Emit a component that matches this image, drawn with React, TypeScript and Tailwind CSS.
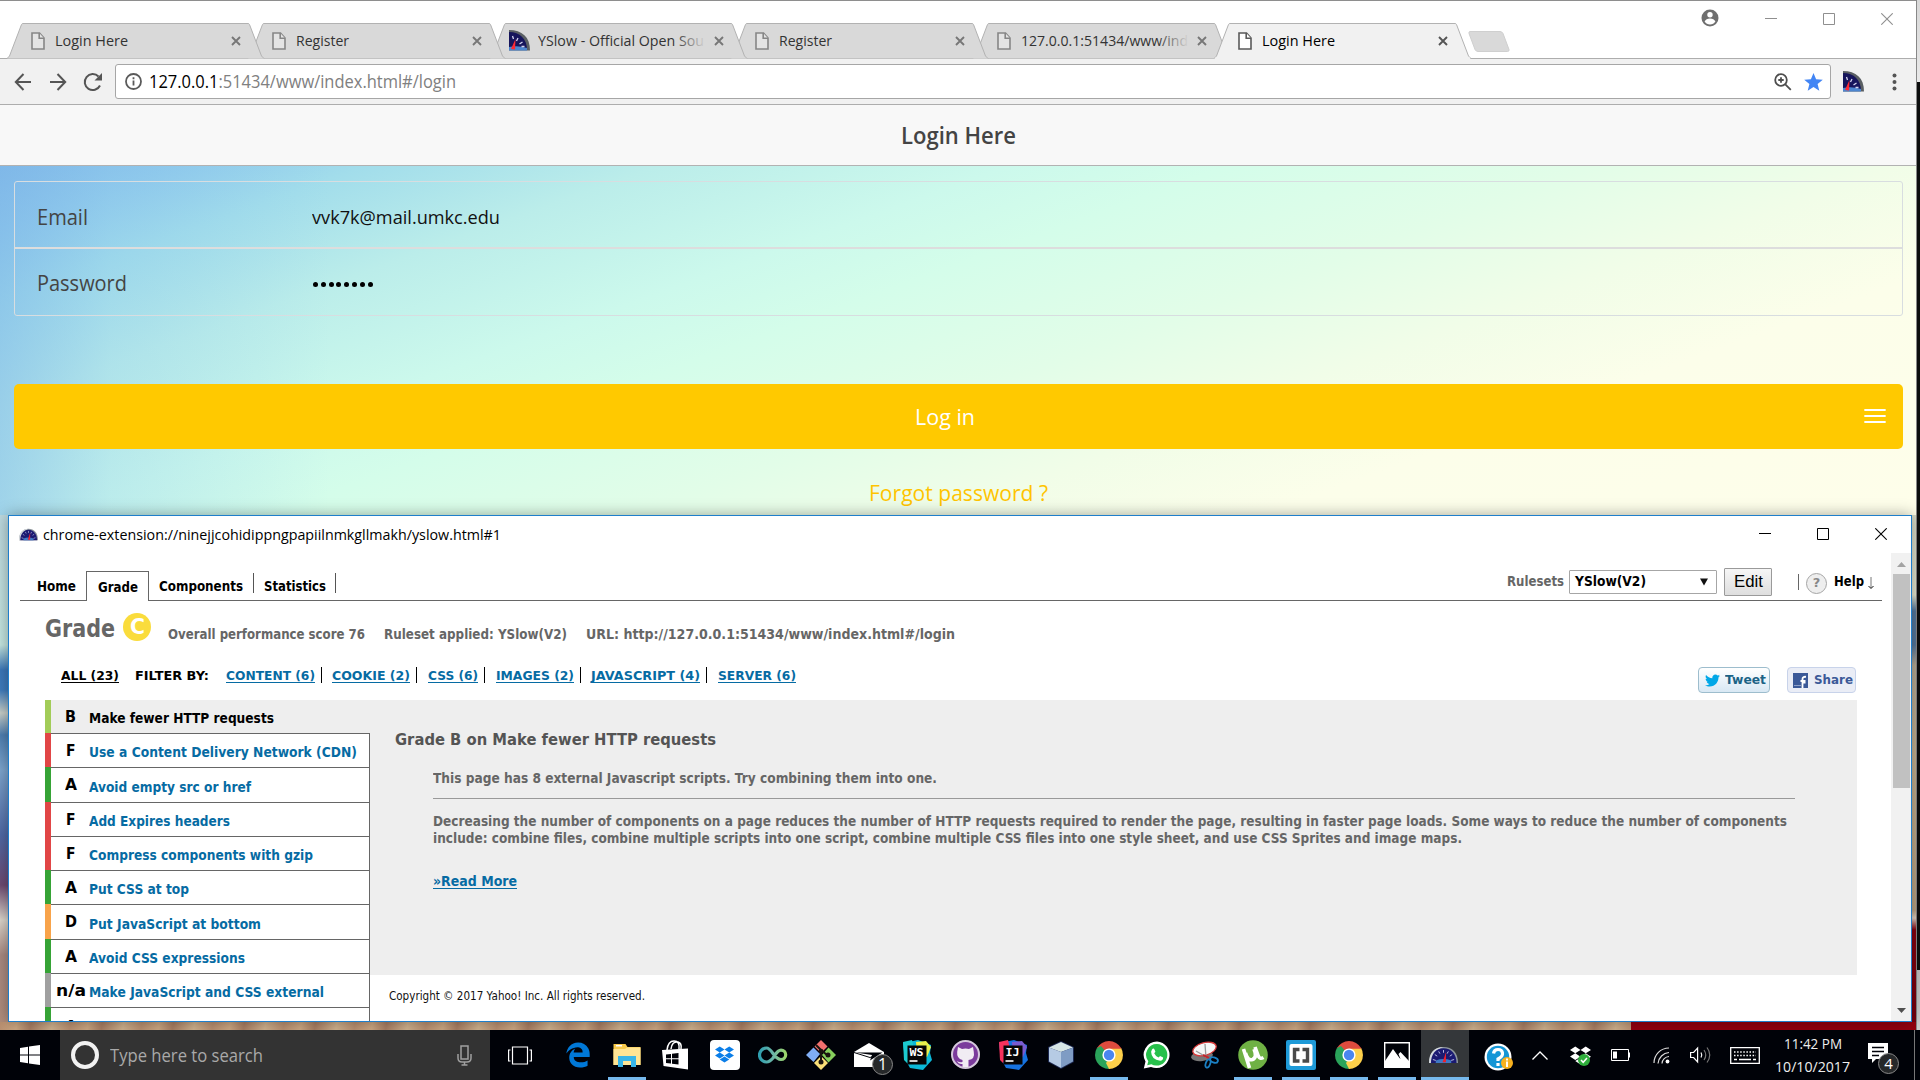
import { useLayoutEffect, useRef, type ReactNode } from 'react';
import { FaEdgeLegacy, FaDropbox, FaTwitter } from 'react-icons/fa6';

/** Single line of text set to an exact advance width. */
function Line({ w, className = '', link = false, children }: { w: number; className?: string; link?: boolean; children: ReactNode }) {
  const ref = useRef<HTMLSpanElement>(null);
  useLayoutEffect(() => {
    const el = ref.current;
    if (el && el.offsetWidth) el.style.transform = `scaleX(${w / el.getBoundingClientRect().width})`;
  }, [w]);
  return (
    <span className={`inline-block shrink-0 ${className}`} style={{ width: w }}>
      <span ref={ref} className={`inline-block origin-left whitespace-nowrap ${link ? 'underline decoration-1 underline-offset-2 [text-decoration-skip-ink:none]' : ''}`}>
        {children}
      </span>
    </span>
  );
}

const UI = "font-['Open_Sans','Noto_Sans',sans-serif]";
const TAHOMA = "font-['DejaVu_Sans',sans-serif]";

/* ---------- small icons ---------- */

function FileIcon({ dark = false }: { dark?: boolean }) {
  return (
    <svg width="14" height="18" viewBox="0 0 14 18" fill={dark ? '#fff' : '#e4e4e4'} stroke={dark ? '#5a5a5a' : '#868686'} strokeWidth="1.6">
      <path d="M1 1h7.5L13 6v11H1z" />
      <path d="M8.2 1v5.2H13" />
    </svg>
  );
}

function CloseX({ dark = false }: { dark?: boolean }) {
  return (
    <svg width="10" height="10" viewBox="0 0 10 10" stroke={dark ? '#555' : '#777'} strokeWidth="1.9">
      <path d="M1 1l8 8M9 1L1 9" />
    </svg>
  );
}

function HalfGauge({ size = 21 }: { size?: number }) {
  return (
    <svg width={size} height={size} viewBox="0 0 21 21">
      <path d="M0 0C13 0 21 7 21 20.500H0z" fill="#5a5f63" />
      <path d="M0 2C11 2 18 9 18 20H0z" fill="#16155c" />
      <path d="M0 17q9-2 18 1v2.500H0z" fill="#4d86cf" />
      <path d="M3.500 6l1 3M9 8l-1.500 3M13.500 12l-3 2M15.500 16.500h-3" stroke="#d5d5ee" strokeWidth="1.300" />
      <path d="M2 19L6.500 9 6 19.500z" fill="#ff2a35" />
    </svg>
  );
}

function Gauge({ w, h }: { w: number; h: number }) {
  return (
    <svg width={w} height={h} viewBox="0 0 30 20" preserveAspectRatio="none">
      <path d="M0 19C0 7 6 1 15 1s15 6 15 18z" fill="#8f979c" />
      <path d="M0 19C0 7 6 1 15 1C8 4 3 9 3 19z" fill="#d5dade" />
      <path d="M2 19C2 9 7 2.500 15 2.500S28.500 9 28.500 19z" fill="#1b1a72" />
      <path d="M7 16q8-3 16 0v3H7z" fill="#3f78c4" />
      <path d="M4 15l3 1M6 9.500l2.500 1.800M10 6l1.300 2.500M15 4.500v3M20 6l-1.300 2.500M24 9.500l-2.500 1.800M26 15l-3 1" stroke="#c3c3ea" strokeWidth="1" />
      <path d="M14 18l3.600-11L17.500 18z" fill="#f01f2c" />
    </svg>
  );
}

function WinControls({ color, gapClass, size }: { color: string; gapClass: string; size: number }) {
  return (
    <div className={`flex items-center ${gapClass}`}>
      <svg width={size} height={size} viewBox="0 0 12 12" stroke={color} strokeWidth="1">
        <path d="M0 5.500h12" />
      </svg>
      <svg width={size} height={size} viewBox="0 0 12 12" stroke={color} strokeWidth="1" fill="none">
        <path d="M.5.5h11v11H.5z" />
      </svg>
      <svg width={size} height={size} viewBox="0 0 12 12" stroke={color} strokeWidth="1.100">
        <path d="M.3.3l11.400 11.400M11.700.3L.3 11.700" />
      </svg>
    </div>
  );
}

/* ---------- browser window ---------- */

type TabData = { title: string; w: number; z: string; gauge?: boolean; fade?: boolean };

const TABS: TabData[] = [
  { title: 'Login Here', w: 73, z: 'z-50' },
  { title: 'Register', w: 53, z: 'z-40' },
  { title: 'YSlow - Official Open Sou', w: 166, z: 'z-30', gauge: true, fade: true },
  { title: 'Register', w: 53, z: 'z-20' },
  { title: '127.0.0.1:51434/www/ind', w: 167, z: 'z-10', fade: true },
  { title: 'Login Here', w: 73, z: 'z-[60]' },
];

function Tab({ tab, active }: { tab: TabData; active: boolean }) {
  return (
    <div className={`relative -mr-4 flex h-9 w-[257.400px] shrink-0 items-center ${tab.z}`}>
      <svg className="absolute inset-0" width="258" height="36" viewBox="0 0 258 36">
        <path d="M0 35.500L2.500 33L14.500 1.500Q15 .5 16 .5H241Q242 .5 242.500 1.500L254.500 33L257 35.500" fill={active ? '#f1f1f1' : '#d9d9d9'} stroke="#b2b2b2" />
        {active && <path d="M1 35.500H256" stroke="#f1f1f1" strokeWidth="2" />}
      </svg>
      <div className="relative flex h-full w-full items-center pb-px">
        <span className={`flex ${tab.gauge ? 'ml-[19px] w-[27px]' : 'ml-6 w-[22px]'}`}>{tab.gauge ? <HalfGauge size={21} /> : <FileIcon dark={active} />}</span>
        <span className="relative mb-[2px] ml-[2px] w-[168px] overflow-hidden text-[15px] leading-6 text-[#333]">
          <Line w={tab.w} className={active ? 'text-black' : ''}>{tab.title}</Line>
          {tab.fade && <span className="absolute inset-y-0 right-0 w-8 bg-linear-to-r from-transparent to-[#d9d9d9]" />}
        </span>
        <span className="ml-[8px]">
          <CloseX dark={active} />
        </span>
      </div>
    </div>
  );
}

function TabStrip() {
  return (
    <div className="flex h-[58px] border-t border-[#8e8e8e] bg-white">
      <div className="isolate mt-[22px] flex pl-[7px]">
        {TABS.map((t, i) => (
          <Tab key={i} tab={t} active={i === 5} />
        ))}
        <svg className="mt-[7px] ml-[12px]" width="44" height="24" viewBox="0 0 44 24">
          <path d="M3 1.500h30q2 0 3 2l6 16q.5 2-1.500 2H11q-2 0-3-2L2 3.500q-.5-2 1-2z" fill="#d9d9d9" stroke="#cfcfcf" />
        </svg>
      </div>
      <div className="ml-auto flex items-start pt-[10px]">
        <svg className="mt-[-2px]" width="18" height="18" viewBox="0 0 18 18">
          <circle cx="9" cy="9" r="8.500" fill="#6f6f6f" />
          <circle cx="9" cy="5.700" r="2.700" fill="#fff" />
          <path d="M3.600 12.500q1.500-3 5.400-3t5.400 3Q12.500 15.500 9 15.500t-5.400-3z" fill="#fff" />
        </svg>
        <div className="mr-[23px] ml-[46px] pt-[2px]">
          <WinControls color="#8f8f8f" gapClass="gap-[46px]" size={12} />
        </div>
      </div>
    </div>
  );
}

function Toolbar() {
  return (
    <div className="flex h-[47px] items-center border-y border-[#adadad] bg-[#f1f1f1]">
      <svg className="ml-[14px]" width="90" height="20" viewBox="0 0 90 20" fill="none" stroke="#555" strokeWidth="2">
        <path d="M17 10H2M9.500 2L1.800 10l7.700 8M36 10h15M43.500 2l7.700 8-7.700 8M86 13.500A8 8 0 1 1 84.500 4.500" />
        <path d="M88 1v7.500h-7.500z" fill="#555" stroke="none" />
      </svg>
      <div className="ml-[11px] flex h-[35px] w-[1716px] items-center rounded-[3px] border border-[#a6a6a6] bg-white">
        <svg className="ml-[9px]" width="17" height="17" viewBox="0 0 17 17" fill="none" stroke="#5a5a5a" strokeWidth="1.800">
          <circle cx="8.500" cy="8.500" r="7.500" />
          <path d="M8.500 7.500v5M8.500 4.200v2" />
        </svg>
        <Line w={307} className="mb-[2px] ml-[7px] text-[18px] leading-7 text-[#808080]">
          <span className="text-black">127.0.0.1</span>:51434/www/index.html#/login
        </Line>
        <svg className="ml-auto" width="18" height="18" viewBox="0 0 18 18" fill="none" stroke="#4e4e4e" strokeWidth="1.800">
          <circle cx="7" cy="7" r="5.800" />
          <path d="M11.300 11.300l5.500 5.500M4.300 7h5.400M7 4.300v5.400" />
        </svg>
        <svg className="mr-[7px] ml-[12px]" width="19" height="18" viewBox="0 0 19 18" fill="#4285f4">
          <path d="M9.500 0l2.600 6.300 6.700.5-5.200 4.300 1.700 6.700-5.800-3.700-5.800 3.700 1.700-6.700L.2 6.800l6.700-.5z" />
        </svg>
      </div>
      <span className="ml-[12px]">
        <HalfGauge size={21} />
      </span>
      <svg className="ml-[28px]" width="5" height="18" viewBox="0 0 5 18" fill="#555">
        <circle cx="2.500" cy="2.500" r="2" />
        <circle cx="2.500" cy="9" r="2" />
        <circle cx="2.500" cy="15.500" r="2" />
      </svg>
    </div>
  );
}

function LoginPage() {
  return (
    <>
      <div className="flex h-[61px] items-center justify-center border-b border-[#b2b2b2] bg-[#f8f8f8]">
        <Line w={115} className="text-[23px] leading-8 font-semibold text-[#444]">Login Here</Line>
      </div>
      <div className="h-[349px] bg-[linear-gradient(90deg,rgba(125,182,232,0.55)_0px,rgba(135,195,235,0.25)_110px,rgba(160,220,235,0)_330px),linear-gradient(160deg,#82bae9_0px,#90caec_60px,#a2ddeb_125px,#bbedea_225px,#ccf9ec_345px,#d4fdea_420px,#e2fde8_545px,#f1fde8_650px,#fcfeea_760px,#fefeea_983px)] px-[14px] pr-[13px] pt-[15px]">
        <div className="h-[135px] rounded-[3px] border border-[#d8dde0] text-[#444]">
          <div className="flex h-[66px] items-center border-b border-[#ddd] pl-[22px]">
            <Line w={51} className="mt-[3px] text-[22px]">Email</Line>
            <Line w={188} className="mt-[5px] ml-[224px] text-[19px] text-[#111]">vvk7k@mail.umkc.edu</Line>
          </div>
          <div className="flex h-[67px] items-center border-t border-[#ddd] pl-[22px]">
            <Line w={90} className="text-[22px]">Password</Line>
            <div className="mt-[5px] ml-[186px] flex gap-[2px]">
              {Array.from({ length: 8 }, (_, i) => (
                <span key={i} className="flex w-[5.800px]">
                  <span className="size-[5px] rounded-full bg-black" />
                </span>
              ))}
            </div>
          </div>
        </div>
        <div className="mt-[68px] flex h-[65px] items-center rounded-[5px] bg-[#ffc900] pr-[17px] text-white">
          <Line w={60} className="ml-[901px] text-[22px]">Log in</Line>
          <svg className="mb-[2px] ml-auto" width="22" height="14" viewBox="0 0 22 14" stroke="#fff" strokeWidth="1.800" strokeLinecap="round">
            <path d="M1 1h20M1 7h20M1 13h20" />
          </svg>
        </div>
        <div className="mt-[27px] ml-[855px]">
          <Line w={179} className="text-[22px] leading-8 text-[#ffc400]">Forgot password ?</Line>
        </div>
      </div>
    </>
  );
}

function BrowserWindow() {
  return (
    <div className={`absolute top-0 left-0 flex h-[1030px] w-[1917px] flex-col border-r border-[#888] ${UI}`}>
      <TabStrip />
      <Toolbar />
      <LoginPage />
      <div className="flex h-[507px] justify-between">
        <div className="w-2 bg-[linear-gradient(180deg,#bcd8de_0px,#c4e6e0_130px,#3c78ba_155px,#3f7cbd_175px,#c9cfc8_198px,#4e7fb2_220px,#7ea6cf_255px,#5069a6_320px,#6d4a72_370px,#dcd6cc_405px,#a98a82_440px,#b08d7c_507px)]" />
        <div className="w-[5px] bg-[linear-gradient(180deg,#d5d9c6_0px,#e3e6cf_80px,#56789c_96px,#56789c_130px,#b5aa94_150px,#c5b190_240px,#b8a283_395px,#e0d0c0_403px,#86000f_415px,#76000e_507px)]" />
      </div>
      <div className="flex flex-1">
        <div className="w-[1631px] bg-[repeating-linear-gradient(100deg,#b98f70_0px,#cda883_17px,#a97e63_31px,#d0b28e_52px,#b98f70_70px)]" />
        <div className="flex-1 bg-[#94000f]" />
      </div>
    </div>
  );
}

/* ---------- YSlow extension window ---------- */

const FILTERS: [string, number, string][] = [
  ['CONTENT (6)', 89, 'ml-[17px]'],
  ['COOKIE (2)', 78, 'ml-[10px]'],
  ['CSS (6)', 50, 'ml-[11px]'],
  ['IMAGES (2)', 78, 'ml-[10.500px]'],
  ['JAVASCRIPT (4)', 109, 'ml-[10.500px]'],
  ['SERVER (6)', 78, 'ml-[10.500px]'],
];

const RULES: { g: string; t: string; w: number; c: string; h: string }[] = [
  { g: 'F', t: 'Use a Content Delivery Network (CDN)', w: 268, c: 'border-l-[#e14646]', h: 'h-[34px]' },
  { g: 'A', t: 'Avoid empty src or href', w: 162, c: 'border-l-[#36a336]', h: 'h-[35px]' },
  { g: 'F', t: 'Add Expires headers', w: 141, c: 'border-l-[#e14646]', h: 'h-[34px]' },
  { g: 'F', t: 'Compress components with gzip', w: 224, c: 'border-l-[#e14646]', h: 'h-[34px]' },
  { g: 'A', t: 'Put CSS at top', w: 100, c: 'border-l-[#36a336]', h: 'h-[34px]' },
  { g: 'D', t: 'Put JavaScript at bottom', w: 172, c: 'border-l-[#f8a34a]', h: 'h-[35px]' },
  { g: 'A', t: 'Avoid CSS expressions', w: 156, c: 'border-l-[#36a336]', h: 'h-[34px]' },
  { g: 'n/a', t: 'Make JavaScript and CSS external', w: 235, c: 'border-l-[#a0a0a0]', h: 'h-[34px]' },
  { g: 'A', t: 'Reduce DNS lookups', w: 139, c: 'border-l-[#36a336]', h: 'h-[34px]' },
];

const GRADE_W: Record<string, number> = { A: 12, B: 11, D: 12, F: 9.5, 'n/a': 30 };

function ExtTabs() {
  return (
    <div className="flex h-[48px] w-[1862px] items-end text-[13.500px] font-bold text-black">
      <div className="flex h-[30px] w-[66px] items-center border-b border-[#666] pl-[17px]">
        <Line w={39} className="mt-px">Home</Line>
      </div>
      <div className="flex h-[30px] w-[63px] items-center justify-center border-x border-t border-[#666]">
        <Line w={40} className="mt-px">Grade</Line>
      </div>
      <div className="flex h-[30px] flex-1 items-center border-b border-[#666]">
        <Line w={84} className="mt-px ml-[10px]">Components</Line>
        <span className="mb-[6px] ml-[10px] h-5 w-px bg-[#555]" />
        <Line w={62} className="mt-px ml-[10px]">Statistics</Line>
        <span className="mb-[6px] ml-[9px] h-5 w-px bg-[#555]" />
        <div className="mb-[8px] ml-auto flex items-center">
          <Line w={57} className="text-[#666]">Rulesets</Line>
          <div className="ml-[5px] flex h-6 w-[148px] items-center justify-between rounded-[1px] border border-[#a6a6a6] bg-white pr-[8px] pl-[5px]">
            <Line w={71}>YSlow(V2)</Line>
            <svg width="8" height="8" viewBox="0 0 8 8"><path d="M0 .5h8L4 7.500z" fill="#111" /></svg>
          </div>
          <div className="ml-[7px] flex h-7 w-[48px] items-center justify-center rounded-[1px] border border-[#9a9a9a] bg-linear-to-b from-[#f6f6f6] to-[#dedede] pb-px font-['Liberation_Sans',sans-serif] text-[16.500px] font-normal">
            <Line w={29}>Edit</Line>
          </div>
          <span className="ml-[26px] h-4 w-px bg-[#666]" />
          <span className="mt-[3px] ml-[7px] flex size-[21px] items-center justify-center rounded-full border border-[#a5a5a5] bg-[#eee] text-[13px] text-[#888]">?</span>
          <Line w={30} className="ml-[7px]">Help</Line>
          <svg className="mt-[2px] mr-[8px] ml-[4px]" width="6" height="12" viewBox="0 0 6 12" stroke="#777" fill="none"><path d="M3 0v11" /><path d="M.5 9L3 11.500 5.500 9" stroke="#111" /></svg>
        </div>
      </div>
    </div>
  );
}

function GradeHeader() {
  return (
    <div className="flex h-[52px] items-start pl-[25px] text-[13.500px] font-bold text-[#666]">
      <Line w={70} className="mt-[9px] text-[25.500px] leading-9">Grade</Line>
      <span className="mt-[12px] ml-[8px] flex size-7 items-center justify-center rounded-full bg-[#fadc3c] text-[21px] leading-7 text-white">
        <Line w={15}>C</Line>
      </span>
      <Line w={197} className="mt-[23px] ml-[17px] leading-5">Overall performance score 76</Line>
      <Line w={183} className="mt-[23px] ml-[19px] leading-5">Ruleset applied: YSlow(V2)</Line>
      <Line w={369} className="mt-[23px] ml-[19px] leading-5">URL: http://127.0.0.1:51434/www/index.html#/login</Line>
    </div>
  );
}

function FilterBar() {
  return (
    <div className="flex h-[47px] items-start pt-[13px] pl-[41px] text-[13px] leading-5 font-bold">
      <Line w={58} link className="text-black">ALL (23)</Line>
      <Line w={74} className="ml-[16px] text-black">FILTER BY:</Line>
      {FILTERS.map(([t, w, m], i) => (
        <div key={t} className={`flex items-start ${m}`}>
          <Line w={w} link className="text-[#066ba3]">{t}</Line>
          {i < 5 && <span className="mt-px ml-[6px] h-4 w-px bg-black" />}
        </div>
      ))}
      <div className="mt-px mr-[35px] ml-auto flex gap-[17px]">
        <div className="flex h-[26px] w-[72px] items-center rounded-[4px] border border-[#9dbdcd] bg-linear-to-b from-white to-[#d8e8f4] pl-[6px] text-[#1b6386]">
          <FaTwitter size={15} color="#00a7e7" />
          <Line w={41} className="ml-[5px]">Tweet</Line>
        </div>
        <div className="flex h-[26px] w-[69px] items-center rounded-[4px] border border-[#c8d3ea] bg-[#eaedf6] pl-[5px] text-[#3b5998]">
          <svg width="15" height="15" viewBox="0 0 15 15">
            <path d="M0 0h15v15H0z" fill="#3b5998" />
            <path d="M9.500 15V9.500h3M9.500 10V6q0-2.500 3.500-2.200M7.500 8h5" stroke="#fff" strokeWidth="1.800" fill="none" />
            <path d="M1 12.500h7" stroke="#8ea0c8" />
          </svg>
          <Line w={39} className="ml-[6px]">Share</Line>
        </div>
      </div>
    </div>
  );
}

function RuleList() {
  return (
    <div className="w-[325px] shrink-0 text-[14px] leading-5 font-bold">
      <div className="flex h-[33px] items-center border-l-[6px] border-l-[#a2cc58] bg-[#eee] text-black">
        <span className="flex w-[38px] justify-center pl-px text-[16px]"><Line w={GRADE_W.B}>B</Line></span>
        <Line w={185} className="mt-[2px]">Make fewer HTTP requests</Line>
      </div>
      {RULES.map((r, i) => (
        <div key={r.t} className={`flex ${r.h} border-l-[6px] ${r.c}`}>
          <div className={`flex flex-1 items-center border-t border-r border-[#666] bg-white ${i === 8 ? 'pt-[4px]' : ''}`}>
            <span className="flex w-[38px] justify-center pl-px text-[16px] text-black"><Line w={GRADE_W[r.g]}>{r.g}</Line></span>
            <Line w={r.w} className="mt-[3px] text-[#066ba3]">{r.t}</Line>
          </div>
        </div>
      ))}
    </div>
  );
}

function RuleDetail() {
  return (
    <div className="w-[1487px]">
      <div className="h-[275px] bg-[#eee] pt-[28px] pl-[25px] text-[13.500px] font-bold text-[#666]">
        <Line w={321} className="block text-[16px] leading-6 text-[#545454]">Grade B on Make fewer HTTP requests</Line>
        <div className="ml-[38px] w-[1362px]">
          <div className="mt-[16px] h-[31px] border-b border-[#999]">
            <Line w={504} className="leading-5">This page has 8 external Javascript scripts. Try combining them into one.</Line>
          </div>
          <div className="mt-[14px] flex flex-col leading-[17px]">
            <Line w={1354}>Decreasing the number of components on a page reduces the number of HTTP requests required to render the page, resulting in faster page loads. Some ways to reduce the number of components</Line>
            <Line w={1029}>include: combine files, combine multiple scripts into one script, combine multiple CSS files into one style sheet, and use CSS Sprites and image maps.</Line>
          </div>
          <Line w={84} link className="mt-[24px] leading-5 text-[#066ba3]">»Read More</Line>
        </div>
      </div>
      <Line w={256} className="mt-[11px] ml-[19px] text-[12px] leading-5 text-[#111]">Copyright © 2017 Yahoo! Inc. All rights reserved.</Line>
    </div>
  );
}

function ExtensionWindow() {
  return (
    <div className="absolute top-[515px] left-[8px] flex h-[507px] w-[1904px] flex-col overflow-hidden border border-[#1e7ecb] bg-white shadow-[0_0_14px_rgba(0,0,0,0.35)]">
      <div className={`flex h-[37px] shrink-0 items-center pl-[10px] ${UI}`}>
        <Gauge w={19} h={13} />
        <Line w={458} className="ml-[5px] text-[14.500px] text-black">chrome-extension://ninejjcohidippngpapiilnmkgllmakh/yslow.html#1</Line>
        <div className="mr-[24px] mb-px ml-auto">
          <WinControls color="#000" gapClass="gap-[46px]" size={12} />
        </div>
      </div>
      <div className="flex min-h-0 flex-1">
        <div className={`h-[468px] w-[1882px] overflow-hidden pl-[11px] ${TAHOMA}`}>
          <ExtTabs />
          <GradeHeader />
          <FilterBar />
          <div className="flex pl-[25px]">
            <RuleList />
            <RuleDetail />
          </div>
        </div>
        <div className="flex flex-1 flex-col items-center bg-[#f1f1f1]">
          <svg className="mt-[9px]" width="9" height="5" viewBox="0 0 9 5"><path d="M4.500 0L9 5H0z" fill="#a3a3a3" /></svg>
          <div className="mt-[7px] h-[214px] w-[17px] bg-[#c1c1c1]" />
          <svg className="mt-auto mb-[8px]" width="9" height="5" viewBox="0 0 9 5"><path d="M4.500 5L9 0H0z" fill="#505050" /></svg>
        </div>
      </div>
    </div>
  );
}

/* ---------- taskbar ---------- */

function Chrome() {
  return (
    <svg width="28" height="28" viewBox="0 0 28 28">
      <path d="M14 14L1.900 7A14 14 0 0 1 26.100 7z" fill="#dd4b3e" />
      <path d="M14 14L26.100 7A14 14 0 0 1 14 28z" fill="#fdd04a" />
      <path d="M14 14v14A14 14 0 0 1 1.900 7z" fill="#2aa35a" />
      <path d="M14 7.500h12.300L20 17z" fill="#fdd04a" />
      <path d="M14 7.500h12.400L26.100 7 14 3z" fill="#dd4b3e" />
      <path d="M8.300 17.300L2 7l4-2 5 6z" fill="#2aa35a" />
      <path d="M19.700 17.300L14 28l-3-6 3-4z" fill="#fdd04a" />
      <circle cx="14" cy="14" r="6.600" fill="#fff" />
      <circle cx="14" cy="14" r="5.200" fill="#4a86f0" />
    </svg>
  );
}

function MonoBadge({ label, a, b, c }: { label: string; a: string; b: string; c: string }) {
  return (
    <svg width="30" height="30" viewBox="0 0 30 30">
      <path d="M1 3L16 0l13 5-1 8 2 7-9 10-13-2-5-9z" fill={a} />
      <path d="M14 2l10-1 5 6-4 10-10-3z" fill={b} />
      <path d="M1 2l9-2 2 9-7 14-3-3z" fill={c} />
      <path d="M5.500 5.500h19v19h-19z" fill="#050505" />
      <text x="7.500" y="15.500" fontFamily="DejaVu Sans Mono, monospace" fontWeight="700" fontSize="10" textLength="14" lengthAdjust="spacingAndGlyphs" fill="#fff">{label}</text>
      <path d="M7.500 21h8" stroke="#fff" strokeWidth="1.600" />
    </svg>
  );
}

const Folder = () => (
  <svg width="28" height="24" viewBox="0 0 28 24">
    <path d="M.5 1h12l2 3H27.500v18H.5z" fill="#f7c94b" />
    <path d="M3 2h6v1.500H3z" fill="#fff" />
    <path d="M.5 6H12l2-1.500h13.500V22H.5z" fill="#ffe594" />
    <path d="M5 24V13h18v11h-5v-6h-8v6z" fill="#38b6e8" />
  </svg>
);

const Store = () => (
  <svg width="27" height="30" viewBox="0 0 27 30">
    <path d="M5 10Q6 1 12 1t5 8M9 9q1-8 7-7 4 1 3 7" fill="none" stroke="#fff" strokeWidth="1.500" />
    <path d="M0 10l26-1.500v21L1.500 26z" fill="#fff" />
    <path d="M4 14.500l5-.6v4.300H4zM10 13.800l6.500-.8v5.200H10zM4 19.200h5v4.300l-5-.6zM10 19.200h6.500v5.200l-6.500-.7z" fill="#000208" />
  </svg>
);

const DropboxTile = () => (
  <span className="flex size-[30px] items-center justify-center rounded-[4px] bg-white">
    <FaDropbox size={19} color="#0b7ee8" />
  </span>
);

const Infinity = () => (
  <svg width="30" height="18" viewBox="0 0 30 18" fill="none" strokeWidth="3.200">
    <defs>
      <linearGradient id="inf" x1="0" x2="1"><stop offset="0" stopColor="#2f9fb0" /><stop offset=".55" stopColor="#6fb7a6" /><stop offset="1" stopColor="#9bd66a" /></linearGradient>
    </defs>
    <path d="M15 12C12 15.500 10.500 16 8.500 16a7 7 0 0 1 0-14C14 2 16 13.500 23 13.500a4.700 4.700 0 0 0 0-9.400C19 4.100 17 9.500 15 12z" stroke="url(#inf)" />
  </svg>
);

const Git = () => (
  <svg width="30" height="30" viewBox="0 0 30 30">
    <path d="M15 0l6.500 6.500L15 13 8.500 6.500z" fill="#f1706e" />
    <path d="M7.500 7.500L14 14l-6.500 8L0 15z" fill="#80aef5" />
    <path d="M22.500 7.500L30 15l-7.500 7.500L16 15z" fill="#86cf5c" />
    <path d="M15 16l7 7-7 7-7-7z" fill="#fadf78" />
    <path d="M10 5l5 5v13M15 10l6 5" stroke="#1a1410" strokeWidth="2" fill="none" />
    <circle cx="15" cy="11" r="2.300" fill="#1a1410" /><circle cx="15" cy="22" r="2.500" fill="#1a1410" /><circle cx="22" cy="15" r="2.500" fill="#1a1410" />
  </svg>
);

const Mail = () => (
  <span className="relative">
    <svg width="30" height="24" viewBox="0 0 30 24">
      <path d="M0 9L15 0l15 9v15H0z" fill="#fff" />
      <path d="M1.500 9.500h27L16 17.500 18 12z" fill="#000208" />
      <path d="M0 9.500L16 14.500l8-3" stroke="#000208" fill="none" />
    </svg>
    <span className="absolute top-[11px] left-[18px] flex size-[21px] items-center justify-center rounded-full border border-[#888] bg-[#26282a] text-[16px] leading-none text-white">1</span>
  </span>
);

const GithubDisc = () => (
  <span className="flex size-[29px] items-center justify-center rounded-full border-2 border-[#d5c8dc] bg-[#7b3b9c]">
    <svg width="25" height="25" viewBox="0 0 25 25">
      <path d="M5 5l4 2q3.500-1 7 0l4-2 .8 5q1.500 7-5.300 8v7h-6v-3q-4 .5-5.500-3 3 2 5.500 1v-2q-6-1.500-5.300-8z" fill="#f1ecf3" />
    </svg>
  </span>
);

const Cube = () => (
  <svg width="30" height="30" viewBox="0 0 30 30">
    <path d="M15 1l13 6v15l-13 7L2 22V7z" fill="#1c2850" />
    <path d="M15 2l12 5.500L15 12 3 7.500z" fill="#d7e6e6" />
    <path d="M3 7.500L15 12v16L3 21.500z" fill="#b6cbe4" />
    <path d="M27 7.500L15 12v16l12-6.500z" fill="#7f9cc4" />
  </svg>
);

const WhatsApp = () => (
  <svg width="28" height="28" viewBox="0 0 28 28">
    <path d="M14 .5A13.300 13.300 0 1 1 8 26L.8 27.500 2.500 20.500A13.300 13.300 0 0 1 14 .5z" fill="#fff" />
    <path d="M14 3A10.800 10.800 0 1 1 8.400 23.300L4.200 24.300 5.300 20.300A10.800 10.800 0 0 1 14 3z" fill="#27c04b" />
    <path d="M9 8.500q1.500-2 2.600.2l.8 2-1.200 1.600q1.300 3 4.300 4.200l1.600-1.600 3 1.500q.3 3-3 3.300-8.700-1-9-9z" fill="#fff" />
  </svg>
);

const Snip = () => (
  <svg width="28" height="28" viewBox="0 0 28 28">
    <ellipse cx="11" cy="15" rx="11" ry="5" fill="#777" transform="rotate(-8 11 15)" />
    <ellipse cx="13.500" cy="8" rx="12" ry="6.300" fill="#f6f6f6" stroke="#d63a3a" strokeWidth="1.300" transform="rotate(-15 13.500 8)" />
    <path d="M14 3l1 14M5 10l12 7" stroke="#999" strokeWidth="1.300" />
    <path d="M12 14l6 3" stroke="#c0262b" strokeWidth="2" />
    <g fill="none" stroke="#1b80c4" strokeWidth="1.800"><ellipse cx="17" cy="22.500" rx="2.200" ry="4.300" transform="rotate(20 17 22.500)" /><ellipse cx="23" cy="19" rx="4" ry="2.600" transform="rotate(20 23 19)" /></g>
  </svg>
);

const UTorrent = () => (
  <svg width="30" height="30" viewBox="0 0 30 30">
    <circle cx="15" cy="15" r="14.800" fill="#6fb144" />
    <path d="M5.500 9L11.500 28M7.500 13q2 8 7 6.500 5-2 1.500-10.500M17 7l3.500 9.500q1.500 3 5 1" stroke="#fff" strokeWidth="3.600" fill="none" />
  </svg>
);

const Brackets = () => (
  <svg width="30" height="30" viewBox="0 0 30 30">
    <rect width="30" height="30" rx="2" fill="#1e9ad8" />
    <rect x="3.500" y="4" width="23" height="22" rx="2" fill="#fff" />
    <path d="M13.500 9.500H8.500v11.500h5M16.500 9.500h5v11.500h-5" fill="none" stroke="#4a4a4a" strokeWidth="3.400" />
  </svg>
);

const Photos = () => (
  <svg width="26" height="26" viewBox="0 0 26 26">
    <path d="M.7.7h24.600v24.600H.7z" fill="#000208" stroke="#fff" strokeWidth="1.400" />
    <path d="M1 19L9 7l6.500 9 1 1-2-5 2-2 8.500 9v6H1z" fill="#fff" />
  </svg>
);

const APPS: { icon: ReactNode; w: string; open?: boolean; active?: boolean }[] = [
  { icon: <FaEdgeLegacy size={26} color="#0078d7" />, w: 'w-[49px]' },
  { icon: <Folder />, w: 'w-[49px]', open: true },
  { icon: <Store />, w: 'w-[49px]' },
  { icon: <DropboxTile />, w: 'w-[49px]' },
  { icon: <Infinity />, w: 'w-12' },
  { icon: <Git />, w: 'w-12' },
  { icon: <Mail />, w: 'w-12' },
  { icon: <MonoBadge label="WS" a="#0bb8d8" b="#e9ef4b" c="#1ccad0" />, w: 'w-12' },
  { icon: <GithubDisc />, w: 'w-12' },
  { icon: <MonoBadge label="IJ" a="#1673e0" b="#7a5bd0" c="#f5325c" />, w: 'w-12' },
  { icon: <Cube />, w: 'w-12' },
  { icon: <Chrome />, w: 'w-12', open: true },
  { icon: <WhatsApp />, w: 'w-12' },
  { icon: <Snip />, w: 'w-12' },
  { icon: <UTorrent />, w: 'w-12', open: true },
  { icon: <Brackets />, w: 'w-12', open: true },
  { icon: <Chrome />, w: 'w-12', open: true },
  { icon: <Photos />, w: 'w-12', open: true },
  { icon: <Gauge w={29} h={18} />, w: 'w-12 pr-[3px]', open: true, active: true },
];

function Tray() {
  return (
    <div className="flex h-full flex-1 items-center">
      <svg className="mt-[3px] ml-[15px]" width="30" height="28" viewBox="0 0 30 28">
        <circle cx="14" cy="14" r="13.500" fill="#fff" />
        <circle cx="14" cy="14" r="11.200" fill="#1596d6" />
        <path d="M9.500 10.500q.5-4 4.500-4t4.500 3.500-4.500 6v2M14 20v3" fill="none" stroke="#fff" strokeWidth="3.200" />
        <circle cx="23" cy="20" r="6" fill="#f7b11f" />
        <path d="M23 18.500V24M23 15.500v2" stroke="#fff" strokeWidth="1.900" />
      </svg>
      <svg className="ml-[18px]" width="16" height="9" viewBox="0 0 16 9" fill="none" stroke="#fff" strokeWidth="1.300"><path d="M.5 8.500L8 1l7.500 7.500" /></svg>
      <span className="relative ml-[22px]">
        <FaDropbox size={21} color="#fff" />
        <svg className="absolute top-[9px] left-[8px]" width="12" height="12" viewBox="0 0 12 12"><circle cx="6" cy="6" r="6" fill="#2fae3c" /><path d="M3 6l2.200 2.300L9 4" stroke="#fff" strokeWidth="1.500" fill="none" /></svg>
      </span>
      <svg className="ml-[20px]" width="20" height="12" viewBox="0 0 20 12" fill="none" stroke="#fff"><path d="M.5.5h17v11H.5zM18.500 3.500v5" /><path d="M2 2.500h4v7H2z" fill="#fff" stroke="none" /></svg>
      <svg className="ml-[22px]" width="17" height="17" viewBox="0 0 17 17" fill="none" stroke="#ddd" strokeWidth="1.200">
        <path d="M1 16A15 15 0 0 1 16 1M5 16.500A12 12 0 0 1 16 5.500M9 16.500a7.500 7.500 0 0 1 7-7" /><circle cx="14.500" cy="14.500" r="1.900" fill="#fff" stroke="none" />
      </svg>
      <svg className="ml-[20px]" width="21" height="18" viewBox="0 0 21 18" fill="none" stroke="#fff" strokeWidth="1.200">
        <path d="M.6 6.500h3l4-4.500v14l-4-4.500h-3z" /><path d="M11 6.500q1.500 2.500 0 5" /><path d="M14 4q3.500 5 0 10M17 1.500q5.500 7.500 0 15" stroke="#777" />
      </svg>
      <svg className="ml-[19px]" width="30" height="17" viewBox="0 0 30 17" fill="none" stroke="#fff" strokeWidth="1.300">
        <path d="M.7.7h28.600v15.600H.7z" /><path d="M4 5h22M4 8.500h22" strokeDasharray="1.500 1.600" /><path d="M4 12.500h3M9 12.500h12M23 12.500h3" />
      </svg>
      <div className="mb-px ml-[15px] flex flex-col items-center text-[15px] leading-[23px] text-[#eee]">
        <Line w={58}>11:42 PM</Line>
        <Line w={75}>10/10/2017</Line>
      </div>
      <span className="relative mb-[5px] ml-[18px]">
        <svg width="20" height="20" viewBox="0 0 20 20"><path d="M0 0h20v16H8l-4 4v-4H0z" fill="#fff" /><path d="M4 4.500h12M4 8.500h12M4 12.500h7" stroke="#000208" strokeWidth="1.300" /></svg>
        <span className="absolute top-[10px] left-[10px] flex size-[21px] items-center justify-center rounded-full border border-[#888] bg-[#26282a] text-[15px] leading-none text-white">4</span>
      </span>
      <span className="mr-[5px] ml-auto h-full w-px bg-[#777]" />
    </div>
  );
}

function Taskbar() {
  return (
    <div className={`absolute bottom-0 left-0 flex h-[50px] w-full items-center bg-[#000208] ${UI}`}>
      <div className="flex w-[60px] justify-center">
        <svg width="20" height="20" viewBox="0 0 20 20" fill="#fff"><path d="M0 3l8-1.200v7.700H0zM9 1.600L20 0v9.500H9zM0 10.500h8v7.700L0 17zM9 10.500h11V20L9 18.400z" /></svg>
      </div>
      <div className="flex h-full w-[430px] items-center bg-[#333]">
        <span className="ml-[11px] size-[28px] rounded-full border-[4px] border-[#f2f2f2]" />
        <Line w={153} className="ml-[11px] text-[17.500px] text-[#a9a9a9]">Type here to search</Line>
        <svg className="mr-[18px] ml-auto" width="15" height="21" viewBox="0 0 15 21" fill="none" stroke="#a0a0a0" strokeWidth="1.500"><path d="M4 1h7v13H4zM1 9v4q0 4 4 4h5q4 0 4-4V9M7.500 17v3.500M4.500 20h6" /></svg>
      </div>
      <div className="flex w-[60px] justify-center pr-px">
        <svg width="24" height="19" viewBox="0 0 24 19" fill="none" stroke="#fff" strokeWidth="1.200"><path d="M4.500 1h15v17h-15zM2.500 4H.6v11h1.900M21.500 4h1.900v11h-1.900" /></svg>
      </div>
      <div className="ml-[3px] flex h-full">
        {APPS.map((a, i) => (
          <div key={i} className={`flex h-full shrink-0 flex-col items-center ${a.w} ${a.active ? 'bg-[#34373a]' : ''}`}>
            <div className="flex flex-1 items-center justify-center pt-[2px]">{a.icon}</div>
            <div className={`h-[3px] ${a.open ? 'bg-[#76b9ed]' : ''} ${a.active ? '-mr-[3px] w-12' : 'w-[38px]'}`} />
          </div>
        ))}
      </div>
      <Tray />
    </div>
  );
}

export default function App() {
  return (
    <div className="relative h-[1080px] w-[1920px] overflow-hidden bg-[linear-gradient(180deg,#d8d8d8_0px,#e8e8e8_82px,#0c0d0d_82px,#0c0d0d_970px,#bdbdbd_970px,#cfcfcf_1030px)]">
      <BrowserWindow />
      <ExtensionWindow />
      <Taskbar />
    </div>
  );
}
